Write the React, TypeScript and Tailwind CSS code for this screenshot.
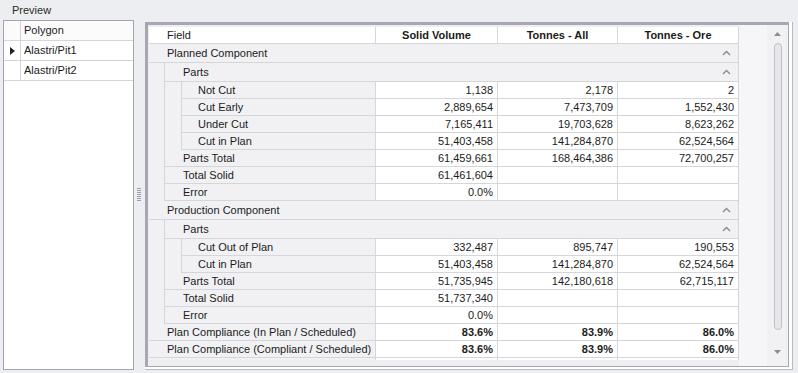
import React from "react";

const LINE = "border-[#d5d6db]";

function Chevron() {
  return (
    <svg width="9" height="6" viewBox="0 0 9 6" className="shrink-0">
      <polyline points="1,5 4.5,1.5 8,5" fill="none" stroke="#8a8a92" strokeWidth="1.4" />
    </svg>
  );
}

type Vals = [string, string, string];

function Values({ v, bold }: { v: Vals; bold?: boolean }) {
  const w = ["w-[122px]", "w-[120px]", "w-[121px]"];
  return (
    <>
      {v.map((x, i) => (
        <div
          key={i}
          className={`${w[i]} shrink-0 h-full bg-white border-r ${LINE} flex items-center justify-end pr-[4px] ${bold ? "font-bold" : ""}`}
        >
          {x}
        </div>
      ))}
    </>
  );
}

function Row({ label, v, level, bold }: { label: string; v: Vals; level: 0 | 1 | 2; bold?: boolean }) {
  const lw = level === 0 ? "w-[227px]" : level === 1 ? "w-[212px]" : "w-[195px]";
  return (
    <div className={`flex h-[17px] border-b ${LINE}`}>
      <div
        className={`${lw} shrink-0 h-full bg-[#f1f1f4] ${level > 0 ? `border-l ${LINE}` : ""} border-r ${LINE} flex items-center ${level === 2 ? "pl-[16px]" : "pl-[18px]"}`}
      >
        {label}
      </div>
      <Values v={v} bold={bold} />
    </div>
  );
}

function GroupHeader({ label, level }: { label: string; level: 0 | 1 }) {
  return (
    <div
      className={`flex h-[19px] items-center justify-between bg-[#f1f1f4] border-b ${LINE} ${level === 1 ? `border-l ${LINE}` : ""} pl-[18px] pr-[7px] border-r`}
    >
      <span>{label}</span>
      <Chevron />
    </div>
  );
}

function Component({
  title,
  parts,
  totals,
}: {
  title: string;
  parts: [string, Vals][];
  totals: [string, Vals][];
}) {
  return (
    <div className="bg-[#f1f1f4]">
      <GroupHeader label={title} level={0} />
      <div className="flex">
        <div className="w-[15px] shrink-0" />
        <div className="flex-1">
          <div>
            <GroupHeader label="Parts" level={1} />
            <div className="flex">
              <div className={`w-[17px] shrink-0 border-l ${LINE}`} />
              <div className="flex-1">
                {parts.map(([l, v]) => (
                  <Row key={l} label={l} v={v} level={2} />
                ))}
              </div>
            </div>
          </div>
          {totals.map(([l, v]) => (
            <Row key={l} label={l} v={v} level={1} />
          ))}
        </div>
      </div>
    </div>
  );
}

export default function App() {
  return (
    <div
      className="w-[798px] h-[373px] bg-[#eceef1] flex flex-col text-[11px] text-[#1b1b1b] overflow-hidden"
      style={{ fontFamily: '"Liberation Sans", Arial, sans-serif' }}
    >
      <div className="h-[18px] shrink-0 pl-[12px] pt-[2px] flex items-center text-[#2a2a2a]">Preview</div>
      <div className="flex-1 flex pt-[2px] pb-[3px] pl-[3px] pr-[5px] min-h-0">
        {/* Left panel */}
        <div className="w-[131px] shrink-0 border border-[#a3a4ad] bg-white">
          <div className={`flex h-[20px] border-b ${LINE} bg-[#fbfbfc]`}>
            <div className={`w-[17px] shrink-0 border-r ${LINE}`} />
            <div className="pl-[3px] flex items-center">Polygon</div>
          </div>
          <div className={`flex h-[20px] border-b ${LINE}`}>
            <div className={`w-[17px] shrink-0 border-r ${LINE} flex items-center justify-center`}>
              <svg width="5" height="8" viewBox="0 0 5 8">
                <polygon points="0,0 5,4 0,8" fill="#222" />
              </svg>
            </div>
            <div className="pl-[3px] flex items-center">Alastri/Pit1</div>
          </div>
          <div className={`flex h-[20px] border-b ${LINE}`}>
            <div className={`w-[17px] shrink-0 border-r ${LINE}`} />
            <div className="pl-[3px] flex items-center">Alastri/Pit2</div>
          </div>
        </div>
        {/* Splitter */}
        <div className="w-[11px] shrink-0 flex items-center justify-center">
          <div className="flex flex-col gap-[1px] -mt-[2px] mr-[2px]">
            {[0, 1, 2, 3, 4, 5, 6].map((i) => (
              <div key={i} className="w-[4px] h-[1px] bg-[#9d9ea8]" />
            ))}
          </div>
        </div>
        {/* Right panel */}
        <div className="flex-1 mt-[2px] flex flex-col min-w-0 border-r border-b border-[#b9bac2] bg-white pr-[3px] pb-[2px]">
          <div className="flex-1 flex border-l-[3px] border-t-[3px] border-r border-b border-[#a6a7b1] bg-[#f6f6f8] min-h-0">
            <div className="w-[591px] shrink-0 pl-[1px] pt-[2px] overflow-hidden flex flex-col bg-[#eeeef1]">
              <div className="bg-white">
                {/* header */}
                <div className={`flex h-[17px] border-b ${LINE} bg-white`}>
                  <div className={`w-[227px] shrink-0 border-r ${LINE} pl-[18px] flex items-center`}>Field</div>
                  <div className={`w-[122px] shrink-0 border-r ${LINE} font-bold flex items-center justify-center`}>Solid Volume</div>
                  <div className={`w-[120px] shrink-0 border-r ${LINE} font-bold flex items-center justify-center`}>Tonnes - All</div>
                  <div className={`w-[121px] shrink-0 border-r ${LINE} font-bold flex items-center justify-center`}>Tonnes - Ore</div>
                </div>
                <Component
                  title="Planned Component"
                  parts={[
                    ["Not Cut", ["1,138", "2,178", "2"]],
                    ["Cut Early", ["2,889,654", "7,473,709", "1,552,430"]],
                    ["Under Cut", ["7,165,411", "19,703,628", "8,623,262"]],
                    ["Cut in Plan", ["51,403,458", "141,284,870", "62,524,564"]],
                  ]}
                  totals={[
                    ["Parts Total", ["61,459,661", "168,464,386", "72,700,257"]],
                    ["Total Solid", ["61,461,604", "", ""]],
                    ["Error", ["0.0%", "", ""]],
                  ]}
                />
                <Component
                  title="Production Component"
                  parts={[
                    ["Cut Out of Plan", ["332,487", "895,747", "190,553"]],
                    ["Cut in Plan", ["51,403,458", "141,284,870", "62,524,564"]],
                  ]}
                  totals={[
                    ["Parts Total", ["51,735,945", "142,180,618", "62,715,117"]],
                    ["Total Solid", ["51,737,340", "", ""]],
                    ["Error", ["0.0%", "", ""]],
                  ]}
                />
                <Row label="Plan Compliance (In Plan / Scheduled)" v={["83.6%", "83.9%", "86.0%"]} level={0} bold />
                <Row label="Plan Compliance (Compliant / Scheduled)" v={["83.6%", "83.9%", "86.0%"]} level={0} bold />
                <div className="flex h-[2px]">
                  <div className={`w-[227px] shrink-0 h-full bg-[#f1f1f4] border-r ${LINE}`} />
                  <div className={`w-[122px] shrink-0 h-full border-r ${LINE}`} />
                  <div className={`w-[120px] shrink-0 h-full border-r ${LINE}`} />
                  <div className={`w-[121px] shrink-0 h-full border-r ${LINE}`} />
                </div>
              </div>
              <div className="flex-1" />
            </div>
            <div className="flex-1" />
            {/* Scrollbar */}
            <div className="w-[21px] shrink-0 bg-[#f1f1f4] flex flex-col items-center pt-[7px] pb-[12px]">
              <svg width="7" height="4" viewBox="0 0 7 4" className="mb-[7px]">
                <polygon points="0,4 3.5,0 7,4" fill="#8b8c95" />
              </svg>
              <div className="w-[8px] h-[287px] rounded-[4px] border border-[#bfc0c8] bg-[#e7e7eb]" />
              <div className="flex-1" />
              <svg width="7" height="4" viewBox="0 0 7 4">
                <polygon points="0,0 3.5,4 7,0" fill="#8b8c95" />
              </svg>
            </div>
          </div>
        </div>
      </div>
    </div>
  );
}
